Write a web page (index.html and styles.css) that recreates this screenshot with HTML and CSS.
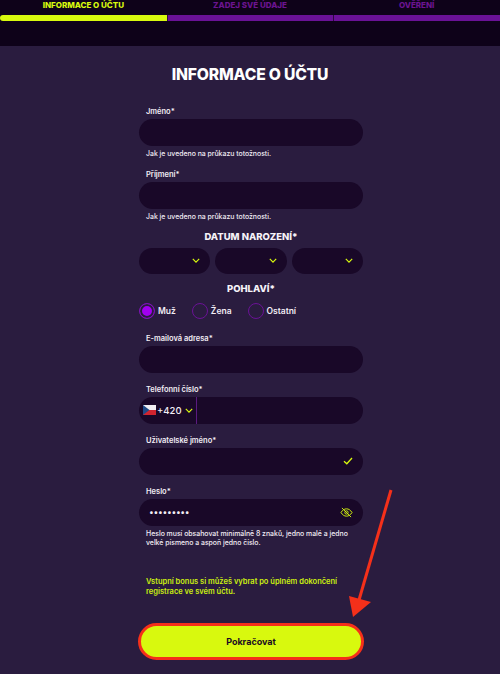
FILE: index.html
```html
<!DOCTYPE html>
<html lang="cs">
<head>
    <meta charset="UTF-8">
    <meta name="viewport" content="width=device-width, initial-scale=1.0">
    <title>Informace o účtu</title>
    <link rel="stylesheet" href="styles.css">
</head>
<body>
    <header class="steps">
        <div class="step active"><span>INFORMACE O ÚČTU</span><i></i></div>
        <div class="step"><span>ZADEJ SVÉ ÚDAJE</span><i></i></div>
        <div class="step"><span>OVĚŘENÍ</span><i></i></div>
    </header>

    <main class="panel">
        <h1>INFORMACE O ÚČTU</h1>

        <form class="form">
            <label class="label">Jméno*</label>
            <div class="field"></div>
            <p class="hint">Jak je uvedeno na průkazu totožnosti.</p>

            <label class="label label-next">Příjmení*</label>
            <div class="field"></div>
            <p class="hint">Jak je uvedeno na průkazu totožnosti.</p>

            <h2 class="group-title date-title">DATUM NAROZENÍ*</h2>
            <div class="dates">
                <div class="field date">
                    <svg class="chevron" viewBox="0 0 10 6"><path d="M1 1l4 4 4-4"/></svg>
                </div>
                <div class="field date">
                    <svg class="chevron" viewBox="0 0 10 6"><path d="M1 1l4 4 4-4"/></svg>
                </div>
                <div class="field date">
                    <svg class="chevron" viewBox="0 0 10 6"><path d="M1 1l4 4 4-4"/></svg>
                </div>
            </div>

            <h2 class="group-title gender-title">POHLAVÍ*</h2>
            <div class="radios">
                <div class="radio checked"><b></b>Muž</div>
                <div class="radio"><b></b>Žena</div>
                <div class="radio"><b></b>Ostatní</div>
            </div>

            <label class="label email-label">E-mailová adresa*</label>
            <div class="field"></div>

            <label class="label label-wide">Telefonní číslo*</label>
            <div class="field phone">
                <svg class="flag" viewBox="0 0 13 10">
                    <rect width="13" height="5" fill="#f1eef2"/>
                    <rect y="5" width="13" height="5" fill="#d0242f"/>
                    <path d="M0 0l6.5 5L0 10z" fill="#1f4a86"/>
                </svg>
                <span class="prefix">+420</span>
                <svg class="chevron chevron-phone" viewBox="0 0 10 6"><path d="M1 1l4 4 4-4"/></svg>
                <span class="divider"></span>
            </div>

            <label class="label label-wide">Uživatelské jméno*</label>
            <div class="field end">
                <svg class="check" viewBox="0 0 10 8"><path d="M1 4.2l2.8 2.6L9 1"/></svg>
            </div>

            <label class="label label-wide">Heslo*</label>
            <div class="field end password">
                <span class="dots">•••••••••</span>
                <svg class="eye" viewBox="0 0 14 12">
                    <path d="M1 6c1.6-2.6 3.6-4 6-4s4.400 1.400 6 4c-1.600 2.600-3.600 4-6 4s-4.400-1.400-6-4z"/>
                    <circle cx="7" cy="6" r="1.800"/>
                    <path d="M2 1l10 10"/>
                </svg>
            </div>
            <p class="hint pass-hint">Heslo musí obsahovat minimálně 8 znaků, jedno malé a jedno velké písmeno a aspoň jedno číslo.</p>

            <p class="bonus">Vstupní bonus si můžeš vybrat po úplném dokončení registrace ve svém účtu.</p>

            <button type="button" class="submit">Pokračovat</button>
        </form>
    </main>

    <svg class="arrow" viewBox="0 0 500 674">
        <path d="M391 490L359 600" stroke="#f5301a" stroke-width="3" fill="none"/>
        <path d="M353 617L349 596L371 602z" fill="#f5301a"/>
    </svg>
</body>
</html>
```

FILE: styles.css
```css
html, body {
    margin: 0;
    padding: 0;
}
body {
    position: relative;
    width: 500px;
    height: 674px;
    overflow: hidden;
    font-family: Inter, "Open Sans", sans-serif;
    background-color: #2a1c3f;
    color: #f2edf5;
}
.steps {
    display: flex;
    height: 46px;
    background-color: #0e0219;
}
.step {
    flex: 1;
    text-align: center;
    font-size: 8px;
    font-weight: 800;
    color: #6b1490;
}
.step span {
    display: block;
    height: 15px;
    line-height: 11px;
}
.step i {
    display: block;
    height: 6px;
    background-color: #6a1296;
    border-left: 1px solid #2c0a40;
}
.step.active {
    color: #d8f90e;
}
.step.active i {
    background-color: #d8f90e;
    border-left: 0;
    border-radius: 3px 0 0 3px;
}
.panel {
    padding-top: 19px;
}
h1 {
    margin: 0;
    text-align: center;
    font-size: 15.7px;
    line-height: 20px;
    font-weight: 800;
    color: #fff;
    letter-spacing: -0.2px;
}
.form {
    width: 224px;
    margin: 22px 0 0 139px;
}
.label {
    display: block;
    padding-left: 7px;
    font-size: 7.5px;
    line-height: 10px;
    font-weight: 600;
}
.label-next {
    margin-top: 12px;
}
.label-wide {
    margin-top: 12px;
}
.email-label {
    margin: 15px 0 2px;
}
.field {
    height: 27px;
    margin-top: 2px;
    border-radius: 13.5px;
    background-color: #190828;
}
.hint {
    margin: 2.5px 0 0;
    font-size: 6.9px;
    line-height: 9.5px;
    font-weight: 500;
    padding-left: 7px;
}
.group-title {
    margin: 0;
    text-align: center;
    font-size: 9.5px;
    line-height: 12px;
    font-weight: 800;
    color: #f6f2f8;
}
.date-title {
    margin-top: 9.5px;
}
.gender-title {
    margin-top: 9px;
}
.dates {
    display: flex;
    gap: 5px;
    margin-top: 5px;
}
.date {
    flex: 1;
    height: 26px;
    margin-top: 0;
    display: flex;
    align-items: center;
    justify-content: flex-end;
    padding-right: 10px;
}
.chevron {
    width: 8px;
    height: 5px;
    fill: none;
    stroke: #d8f90e;
    stroke-width: 1.5;
}
.radios {
    display: flex;
    align-items: center;
    margin-top: 8px;
}
.radio {
    display: flex;
    align-items: center;
    gap: 3px;
    margin-right: 16px;
    font-size: 8.5px;
    font-weight: 600;
}
.radio b {
    box-sizing: border-box;
    width: 16px;
    height: 16px;
    border: 1.5px solid #6a1296;
    border-radius: 50%;
}
.radio.checked b {
    border-color: #7d14b4;
    background-color: #a200f0;
    box-shadow: inset 0 0 0 2px #2a1c3f;
}
.phone {
    display: flex;
    align-items: center;
    padding-left: 4px;
}
.flag {
    width: 13px;
    height: 10px;
}
.prefix {
    margin-left: 1px;
    font-size: 9.5px;
    font-weight: 500;
}
.chevron-phone {
    margin-left: 3px;
}
.divider {
    width: 1px;
    height: 27px;
    margin-left: 3px;
    background-color: #5a1a80;
}
.end {
    display: flex;
    align-items: center;
    justify-content: flex-end;
    padding-right: 10px;
}
.check {
    width: 10px;
    height: 8px;
    fill: none;
    stroke: #d8f90e;
    stroke-width: 1.3;
}
.password {
    justify-content: space-between;
    padding-left: 10px;
}
.dots {
    font-size: 8.5px;
    letter-spacing: -0.3px;
}
.eye {
    width: 13px;
    height: 11px;
    fill: none;
    stroke: #d8f90e;
    stroke-width: 1;
}
.pass-hint {
    margin-top: 3px;
}
.bonus {
    margin: 29px 0 0;
    padding-left: 7px;
    font-size: 7.5px;
    line-height: 10.5px;
    font-weight: 600;
    color: #cdf00f;
}
.submit {
    display: block;
    box-sizing: border-box;
    width: 226px;
    height: 37px;
    margin: 25px 0 0 -1px;
    border: 3px solid #f5301a;
    border-radius: 19px;
    background-color: #d8f90e;
    font-family: inherit;
    font-size: 9px;
    font-weight: 700;
    color: #1a0a22;
}
.arrow {
    position: absolute;
    left: 0;
    top: 0;
    width: 500px;
    height: 674px;
}
```
